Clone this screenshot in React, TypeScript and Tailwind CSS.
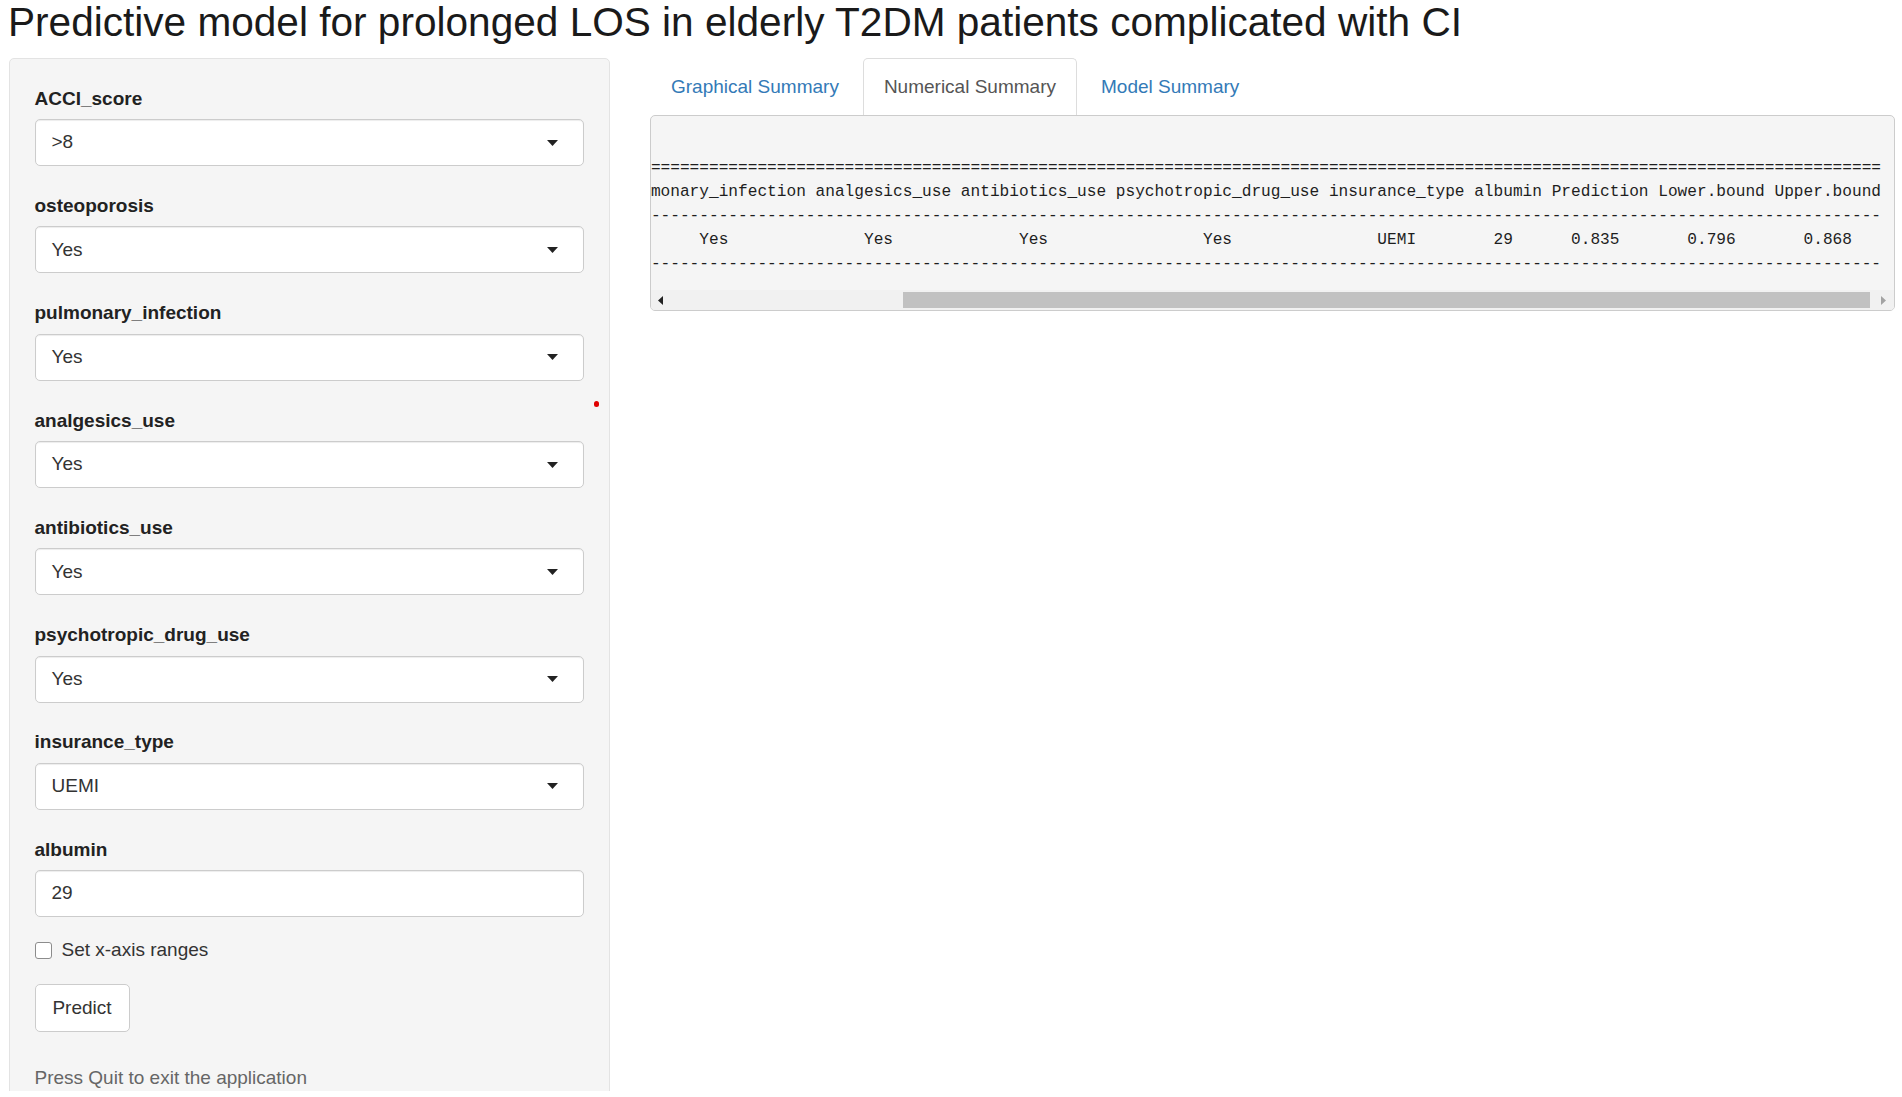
import React from "react";

const TOTAL = 154;

function place(items: [number, string][]): string {
  const arr = new Array(TOTAL).fill(" ");
  for (const [start, text] of items) {
    for (let i = 0; i < text.length; i++) arr[start + i] = text[i];
  }
  return arr.join("");
}

const header =
  "ACCI_score osteoporosis pulmonary_infection analgesics_use antibiotics_use psychotropic_drug_use insurance_type albumin Prediction Lower.bound Upper.bound";
const off = 27;
const row = place([
  [4, ">8"],
  [15, "Yes"],
  [off + 5, "Yes"],
  [off + 22, "Yes"],
  [off + 38, "Yes"],
  [off + 57, "Yes"],
  [off + 75, "UEMI"],
  [off + 87, "29"],
  [off + 95, "0.835"],
  [off + 107, "0.796"],
  [off + 119, "0.868"],
]);
const eq = "=".repeat(TOTAL);
const dash = "-".repeat(TOTAL);
const outputText = ["", eq, header, dash, row, dash].join("\n");

function Caret() {
  return (
    <svg width="11" height="6" viewBox="0 0 11 6">
      <polygon points="0,0 11,0 5.5,6" fill="#222" />
    </svg>
  );
}

function SelectField({ label, value }: { label: string; value: string }) {
  return (
    <div className="mb-[25.8px]">
      <div className="font-bold text-[19px] leading-[27px] text-[#222] mb-[7.5px]">{label}</div>
      <div className="h-[47px] bg-white border border-[#cccccc] rounded-[5px] shadow-[inset_0_1px_1px_rgba(0,0,0,0.075)] flex items-center justify-between pl-[16px] pr-[25px]">
        <span className="text-[19px] text-[#333]">{value}</span>
        <Caret />
      </div>
    </div>
  );
}

export default function App() {
  const fields: [string, string][] = [
    ["ACCI_score", ">8"],
    ["osteoporosis", "Yes"],
    ["pulmonary_infection", "Yes"],
    ["analgesics_use", "Yes"],
    ["antibiotics_use", "Yes"],
    ["psychotropic_drug_use", "Yes"],
    ["insurance_type", "UEMI"],
  ];
  return (
    <div className="w-[1902px] h-[1097px] bg-white overflow-hidden font-['Liberation_Sans',Arial,sans-serif] text-[#333]">
      <div className="h-[1091px] overflow-hidden">
        <h2 className="pl-[8px] text-[40.6px] leading-[1.1] text-[#1a1a1a] font-normal m-0">
          Predictive model for prolonged LOS in elderly T2DM patients complicated with CI
        </h2>
        <div className="flex mt-[13.5px] pl-[8.5px]">
          <div className="relative w-[601px] shrink-0 bg-[#f5f5f5] border border-[#e3e3e3] rounded-[5px] px-[25px] pt-[25.5px] pb-[60px]">
            <span className="absolute left-[584px] top-[342px] w-[5px] h-[6px] rounded-full bg-[#e00000]" />
            {fields.map(([l, v]) => (
              <SelectField key={l} label={l} value={v} />
            ))}
            <div>
              <div className="font-bold text-[19px] leading-[27px] text-[#222] mb-[7.5px]">albumin</div>
              <div className="h-[47px] bg-white border border-[#cccccc] rounded-[5px] shadow-[inset_0_1px_1px_rgba(0,0,0,0.075)] flex items-center pl-[16px]">
                <span className="text-[19px] text-[#333]">29</span>
              </div>
            </div>
            <div className="flex items-center mt-[20px] h-[27px]">
              <span className="w-[17px] h-[17px] bg-white border border-[#8c8c8c] rounded-[3px]" />
              <span className="ml-[10px] text-[19px] text-[#333]">Set x-axis ranges</span>
            </div>
            <div className="mt-[20px]">
              <div className="inline-flex items-center justify-center h-[48px] w-[95px] bg-white border border-[#cccccc] rounded-[5px] text-[19px] text-[#333]">
                Predict
              </div>
            </div>
            <div className="mt-[32px] text-[19px] leading-[27px] text-[#666]">
              Press Quit to exit the application
            </div>
          </div>
          <div className="ml-[40.5px] w-[1245px] shrink-0">
            <div className="flex h-[57px]">
              <div className="px-[20px] pt-[1px] flex items-center border border-transparent mr-[3px] text-[19px] text-[#337ab7]">
                Graphical Summary
              </div>
              <div className="px-[20px] pt-[1px] flex items-center border border-[#dddddd] border-b-0 rounded-t-[5px] bg-white mr-[3px] text-[19px] text-[#555]">
                Numerical Summary
              </div>
              <div className="px-[20px] pt-[1px] flex items-center border border-transparent text-[19px] text-[#337ab7]">
                Model Summary
              </div>
            </div>
            <div className="bg-[#f5f5f5] border border-[#cccccc] rounded-[5px] overflow-hidden">
              <div className="flex justify-end overflow-hidden pt-[16px] pb-[14px] pr-[13px]">
                <pre className="m-0 shrink-0 whitespace-pre font-['Liberation_Mono','DejaVu_Sans_Mono',monospace] text-[16.15px] leading-[24px] text-[#1e1e1e]">
                  {outputText}
                </pre>
              </div>
              <div className="flex h-[20px] bg-[#f1f1f1]">
                <div className="w-[18px] flex items-center justify-center">
                  <svg width="5" height="9" viewBox="0 0 5 9">
                    <polygon points="5,0 5,9 0,4.5" fill="#222" />
                  </svg>
                </div>
                <div className="w-[234px]" />
                <div className="flex-1 my-[2px] bg-[#c1c1c1]" />
                <div className="w-[22px] ml-[2px] flex items-center justify-center">
                  <svg width="5" height="9" viewBox="0 0 5 9">
                    <polygon points="0,0 0,9 5,4.5" fill="#a3a3a3" />
                  </svg>
                </div>
              </div>
            </div>
          </div>
        </div>
      </div>
    </div>
  );
}
